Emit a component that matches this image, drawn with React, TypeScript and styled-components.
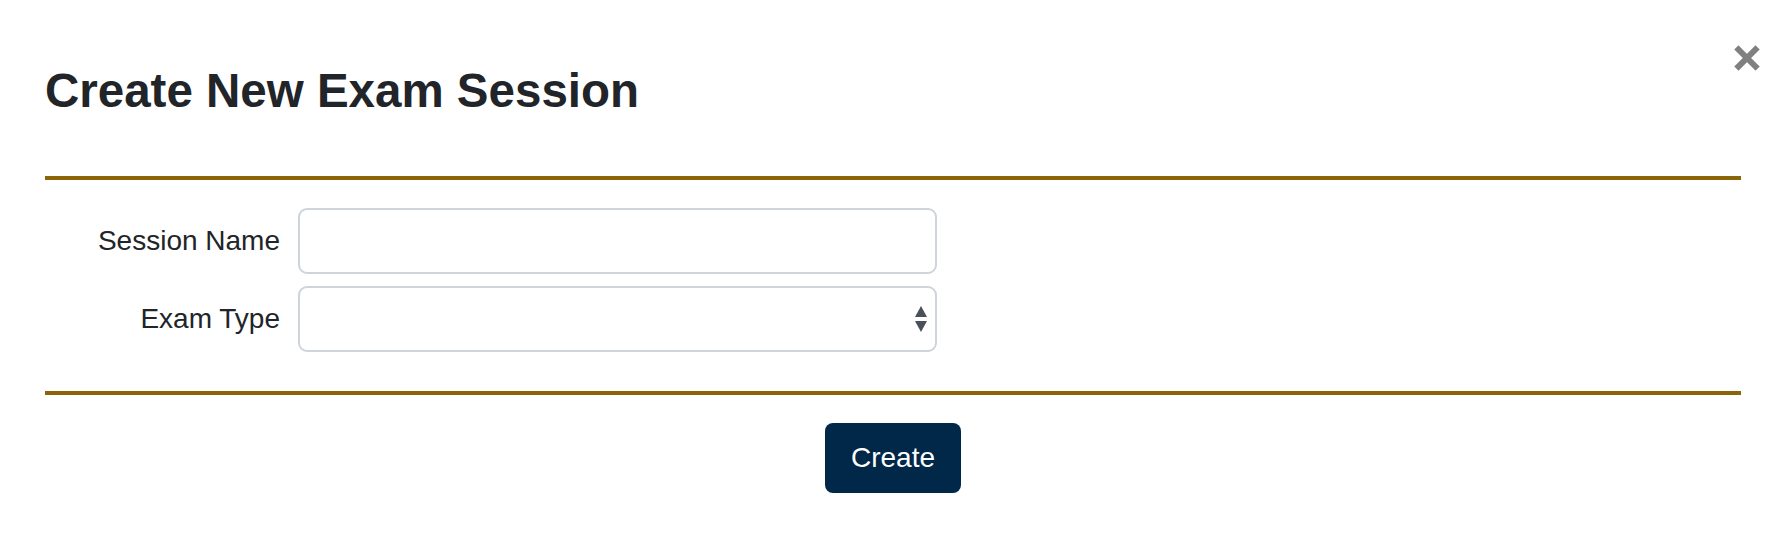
import React from "react";
import styled, { createGlobalStyle } from "styled-components";

const GlobalStyle = createGlobalStyle`
  html, body {
    margin: 0;
    padding: 0;
    background: #ffffff;
  }
  body {
    font-family: "Liberation Sans", Helvetica, Arial, sans-serif;
    color: #212529;
  }
`;

const Modal = styled.div`
  position: relative;
  width: 1788px;
  height: 552px;
  box-sizing: border-box;
  padding: 0 47px 0 45px;
  background: #ffffff;
`;

const Header = styled.div`
  padding: 62px 0 57px;
  border-bottom: 4px solid #8b6508;
`;

const Title = styled.h2`
  margin: 0;
  font-size: 47.5px;
  line-height: 57px;
  font-weight: 700;
  color: #212529;
`;

const CloseButton = styled.button`
  position: absolute;
  top: 44px;
  right: 27px;
  width: 28px;
  height: 28px;
  padding: 0;
  border: 0;
  background: transparent;
  cursor: pointer;
  display: flex;
`;

const Body = styled.form`
  display: grid;
  grid-template-columns: 235px 639px;
  column-gap: 18px;
  row-gap: 12px;
  padding: 28px 0 39px;
  border-bottom: 4px solid #8b6508;
`;

const Label = styled.label`
  text-align: right;
  align-self: center;
  font-size: 28px;
  line-height: 1.5;
  color: #212529;
`;

const fieldBox = `
  width: 100%;
  height: 66px;
  box-sizing: border-box;
  border: 2px solid #ced4da;
  border-radius: 9px;
  background: #ffffff;
  font-family: "Liberation Sans", Helvetica, Arial, sans-serif;
  font-size: 28px;
  color: #495057;
  padding: 0 24px;
  outline: none;
`;

const TextInput = styled.input`
  ${fieldBox}
`;

const SelectWrap = styled.div`
  position: relative;
`;

const Select = styled.select`
  ${fieldBox}
  appearance: none;
  -webkit-appearance: none;
`;

const Arrows = styled.svg`
  position: absolute;
  right: 9px;
  top: 50%;
  transform: translateY(-50%);
  pointer-events: none;
`;

const Footer = styled.div`
  display: flex;
  justify-content: center;
  padding-top: 28px;
`;

const PrimaryButton = styled.button`
  width: 136px;
  height: 70px;
  border: 0;
  border-radius: 8px;
  background: #012749;
  color: #ffffff;
  font-family: "Liberation Sans", Helvetica, Arial, sans-serif;
  font-size: 28px;
  cursor: pointer;
`;

export default function App() {
  return (
    <>
      <GlobalStyle />
      <Modal>
        <Header>
          <Title>Create New Exam Session</Title>
        </Header>
        <CloseButton aria-label="Close">
          <svg width="28" height="28" viewBox="0 0 28 28">
            <path
              d="M5.5 5.5 L22.5 22.5 M22.5 5.5 L5.5 22.5"
              stroke="#808080"
              strokeWidth="6"
              strokeLinecap="square"
              fill="none"
            />
          </svg>
        </CloseButton>
        <Body onSubmit={(e) => e.preventDefault()}>
          <Label htmlFor="sessionName">Session Name</Label>
          <TextInput id="sessionName" type="text" />
          <Label htmlFor="examType">Exam Type</Label>
          <SelectWrap>
            <Select id="examType" defaultValue="">
              <option value=""></option>
            </Select>
            <Arrows width="14" height="26" viewBox="0 0 14 26">
              <path d="M7 0 L13 11 L1 11 Z" fill="#495057" />
              <path d="M1 15 L13 15 L7 26 Z" fill="#495057" />
            </Arrows>
          </SelectWrap>
        </Body>
        <Footer>
          <PrimaryButton type="button">Create</PrimaryButton>
        </Footer>
      </Modal>
    </>
  );
}
